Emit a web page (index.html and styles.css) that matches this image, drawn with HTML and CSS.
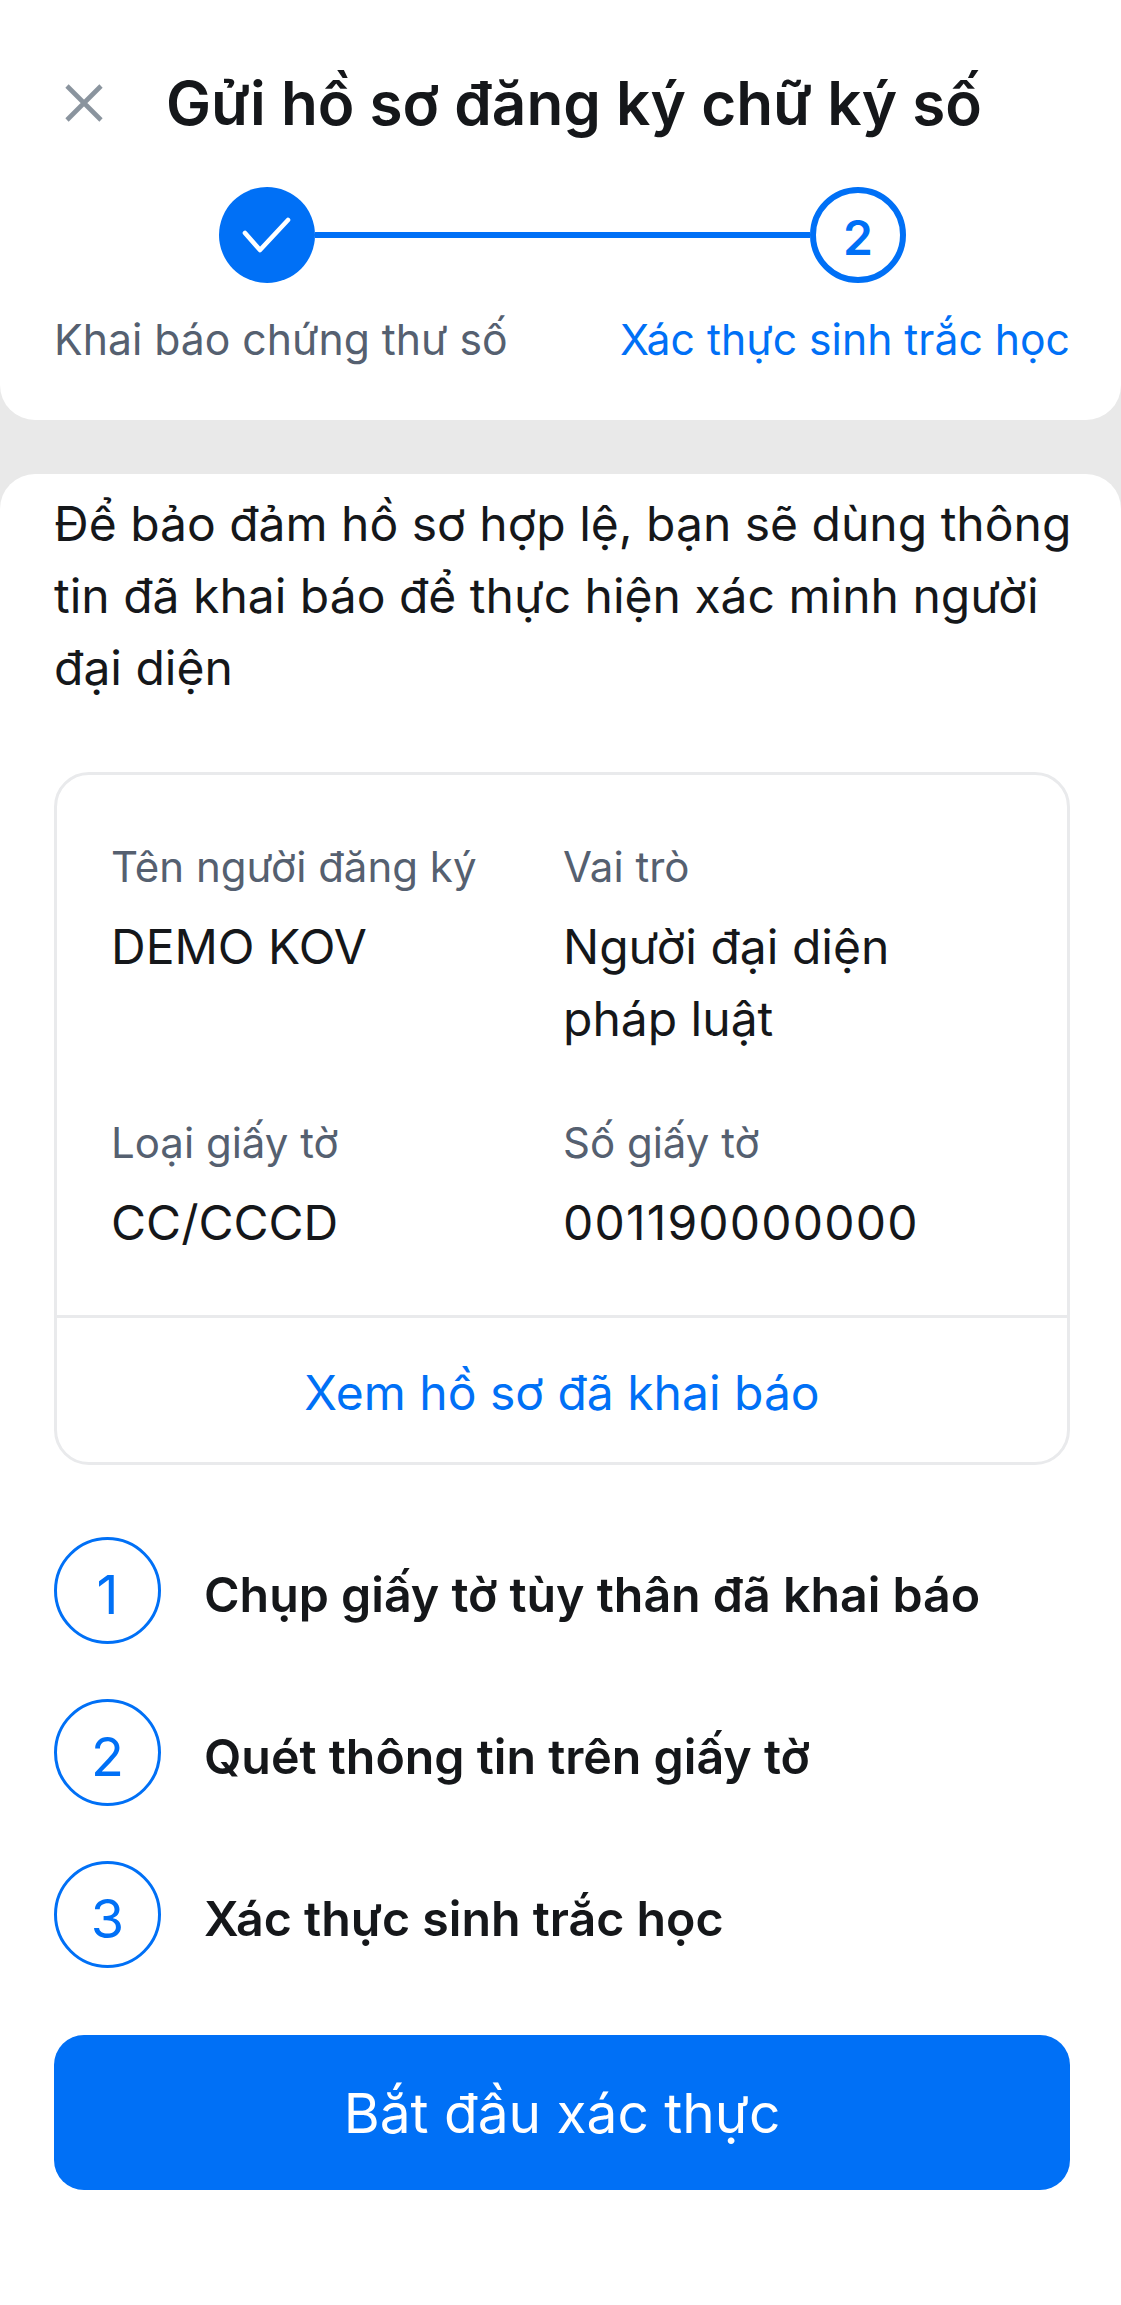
FILE: index.html
```html
<!DOCTYPE html>
<html lang="vi">
<head>
    <meta charset="UTF-8">
    <meta name="viewport" content="width=device-width, initial-scale=1.0">
    <title>Gửi hồ sơ đăng ký chữ ký số</title>
    <link rel="stylesheet" href="styles.css">
</head>
<body>
    <!-- Header with stepper -->
    <header class="header">
        <div class="title-row">
            <svg class="close-icon" viewBox="0 0 38 38" fill="none" stroke="#8a949e" stroke-width="4.6">
                <path d="M2 2 L36 36 M36 2 L2 36"/>
            </svg>
            <h1 class="title">Gửi hồ sơ đăng ký chữ ký số</h1>
        </div>
        <div class="stepper">
            <div class="step-done">
                <svg viewBox="0 0 96 96" fill="none" stroke="#fff" stroke-width="4.6" stroke-linecap="round" stroke-linejoin="round">
                    <path d="M26 46 L41 63 L69 33"/>
                </svg>
            </div>
            <div class="step-line"></div>
            <div class="step-current">2</div>
        </div>
        <div class="step-labels">
            <span class="step-label">Khai báo chứng thư số</span>
            <span class="step-label active">Xác thực sinh trắc học</span>
        </div>
    </header>

    <main class="content">
        <p class="intro">Để bảo đảm hồ sơ hợp lệ, bạn sẽ dùng thông tin đã khai báo để thực hiện xác minh người đại diện</p>

        <section class="info-card">
            <div class="info-grid">
                <div class="info-item">
                    <div class="info-label">Tên người đăng ký</div>
                    <div class="info-value">DEMO KOV</div>
                </div>
                <div class="info-item">
                    <div class="info-label">Vai trò</div>
                    <div class="info-value">Người đại diện<br>pháp luật</div>
                </div>
                <div class="info-item">
                    <div class="info-label">Loại giấy tờ</div>
                    <div class="info-value">CC/CCCD</div>
                </div>
                <div class="info-item">
                    <div class="info-label">Số giấy tờ</div>
                    <div class="info-value digits">001190000000</div>
                </div>
            </div>
            <div class="info-link">Xem hồ sơ đã khai báo</div>
        </section>

        <ul class="steps">
            <li class="step"><span class="step-num">1</span><span class="step-text">Chụp giấy tờ tùy thân đã khai báo</span></li>
            <li class="step"><span class="step-num">2</span><span class="step-text">Quét thông tin trên giấy tờ</span></li>
            <li class="step"><span class="step-num">3</span><span class="step-text">Xác thực sinh trắc học</span></li>
        </ul>

        <button class="start-btn">Bắt đầu xác thực</button>
    </main>
</body>
</html>
```

FILE: styles.css
```css
* {
    box-sizing: border-box;
}
body {
    font-family: Inter, "Noto Sans", sans-serif;
    background-color: #e9e9e9;
    color: #15171a;
    margin: 0;
    padding: 0;
}
.header {
    height: 420px;
    background: #fff;
    border-radius: 0 0 35px 35px;
    padding: 73px 51px 0 54px;
}
.title-row {
    display: flex;
    align-items: center;
    height: 62px;
    padding-left: 11px;
}
.close-icon {
    width: 38px;
    height: 38px;
    flex: none;
    margin-top: -2px;
}
.title {
    margin: 0 0 0 63px;
    font-size: 60.2px;
    font-weight: 600;
    line-height: 62px;
    white-space: nowrap;
}
.stepper {
    display: flex;
    align-items: center;
    margin: 52px 0 0 165px;
    width: 687px;
}
.step-done {
    width: 96px;
    height: 96px;
    border-radius: 50%;
    background: #0070f6;
    flex: none;
}
.step-done svg {
    display: block;
}
.step-line {
    flex: 1;
    height: 6px;
    background: #0070f6;
}
.step-current {
    width: 96px;
    height: 96px;
    border: 6px solid #0070f6;
    border-radius: 50%;
    padding-top: 5px;
    color: #0070f6;
    font-size: 48px;
    font-weight: 600;
    display: flex;
    align-items: center;
    justify-content: center;
    flex: none;
}
.step-labels {
    display: flex;
    justify-content: space-between;
    margin-top: 31px;
}
.step-label {
    font-size: 42.7px;
    line-height: 52px;
    color: #556070;
}
.step-label.active {
    color: #0070f6;
}
.content {
    margin-top: 54px;
    min-height: 1831px;
    background: #fff;
    border-radius: 35px 35px 0 0;
    padding: 14px 51px 0 54px;
}
.intro {
    margin: 0 -10px 0 0;
    font-size: 48px;
    line-height: 72px;
}
.info-card {
    margin-top: 68px;
    border: 3px solid #e9eaec;
    border-radius: 35px;
}
.info-grid {
    display: grid;
    grid-template-columns: 452px 1fr;
    row-gap: 58px;
    padding: 62px 54px 56px;
    border-bottom: 3px solid #e9eaec;
}
.info-label {
    font-size: 42px;
    line-height: 60px;
    color: #556070;
}
.info-value {
    margin-top: 14px;
    font-size: 48px;
    line-height: 72px;
}
.digits {
    letter-spacing: 1.2px;
}
.info-link {
    height: 144px;
    padding-top: 4px;
    display: flex;
    align-items: center;
    justify-content: center;
    font-size: 48px;
    color: #0070f6;
}
.steps {
    list-style: none;
    margin: 72px 0 0;
    padding: 0;
    display: flex;
    flex-direction: column;
    gap: 55px;
}
.step {
    display: flex;
    align-items: center;
    gap: 43px;
}
.step-num {
    width: 107px;
    height: 107px;
    border: 3px solid #0070f6;
    border-radius: 50%;
    padding-top: 8px;
    color: #0070f6;
    font-size: 54px;
    display: flex;
    align-items: center;
    justify-content: center;
    flex: none;
}
.step-text {
    padding-top: 8px;
    font-size: 48.3px;
    font-weight: 600;
}
.start-btn {
    display: block;
    width: 100%;
    height: 155px;
    margin-top: 67px;
    border: none;
    border-radius: 30px;
    background: #0070f6;
    color: #fff;
    font-family: inherit;
    font-size: 55px;
}
```
